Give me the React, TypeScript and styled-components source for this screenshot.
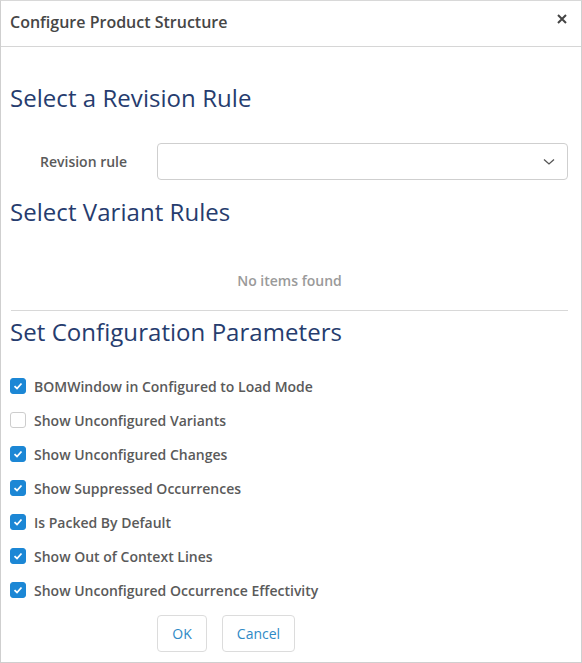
import React from "react";
import styled, { createGlobalStyle } from "styled-components";

const Global = createGlobalStyle`
  html, body { margin: 0; padding: 0; background: #fff; }
  body { font-family: "Open Sans", "Noto Sans", sans-serif; }
  * { box-sizing: border-box; }
`;

const Dialog = styled.div`
  width: 582px;
  height: 663px;
  border: 1px solid #cfcfcf;
  border-top-color: #d8d8d8;
  background: #fff;
  display: flex;
  flex-direction: column;
`;

const Header = styled.div`
  height: 46px;
  border-bottom: 1px solid #d6d6d6;
  display: flex;
  align-items: center;
  justify-content: space-between;
  padding: 0 12px 4px 9px;
`;

const Title = styled.div`
  font-size: 16px;
  font-weight: 600;
  color: #464646;
`;

const Close = styled.button`
  border: none;
  background: none;
  padding: 0;
  width: 14px;
  height: 14px;
  display: flex;
  align-items: center;
  justify-content: center;
  margin-top: -6px;
  cursor: pointer;
`;

const Body = styled.div`
  flex: 1;
  padding: 35px 13px 0 9px;
  display: flex;
  flex-direction: column;
`;

const Heading = styled.h2`
  margin: 0;
  font-size: 24px;
  font-weight: 400;
  line-height: 32px;
  color: #263c6e;
  letter-spacing: 0.05px;
`;

const FieldRow = styled.div`
  display: flex;
  align-items: center;
  margin-top: 29px;
  margin-bottom: 16px;
`;

const Label = styled.label`
  width: 147px;
  padding-left: 30px;
  font-size: 14px;
  font-weight: 600;
  color: #5a5a5a;
`;

const Select = styled.div`
  flex: 1;
  height: 37px;
  border: 1px solid #cfcfcf;
  border-radius: 4px;
  display: flex;
  align-items: center;
  justify-content: flex-end;
  padding-right: 12px;
`;

const Empty = styled.div`
  text-align: center;
  font-size: 14px;
  font-weight: 600;
  color: #9a9a9a;
  padding: 43px 0 20px;
  border-bottom: 1px solid #d8d8d8;
  margin-left: 1px;
  margin-bottom: 5px;
`;

const CheckList = styled.div`
  display: flex;
  flex-direction: column;
  gap: 14px;
  margin-top: 28px;
`;

const CheckRow = styled.label`
  display: flex;
  align-items: center;
  gap: 8px;
  height: 20px;
  font-size: 14px;
  font-weight: 600;
  color: #5a5a5a;
`;

const Box = styled.span<{ $checked: boolean }>`
  width: 16px;
  height: 16px;
  border-radius: 3px;
  display: flex;
  align-items: center;
  justify-content: center;
  background: ${(p) => (p.$checked ? "#1c87d5" : "#fff")};
  border: 1px solid ${(p) => (p.$checked ? "#1c87d5" : "#cdcdcd")};
`;

const Buttons = styled.div`
  display: flex;
  gap: 15px;
  padding-left: 147px;
  margin-top: 15px;
`;

const Button = styled.button<{ $w: number }>`
  width: ${(p) => p.$w}px;
  height: 37px;
  border: 1px solid #dcdcdc;
  border-radius: 4px;
  background: #fff;
  color: #2f8ac6;
  font-family: "Open Sans", sans-serif;
  font-size: 14px;
  cursor: pointer;
`;

const items: [string, boolean][] = [
  ["BOMWindow in Configured to Load Mode", true],
  ["Show Unconfigured Variants", false],
  ["Show Unconfigured Changes", true],
  ["Show Suppressed Occurrences", true],
  ["Is Packed By Default", true],
  ["Show Out of Context Lines", true],
  ["Show Unconfigured Occurrence Effectivity", true],
];

export default function App() {
  return (
    <>
      <Global />
      <Dialog>
        <Header>
          <Title>Configure Product Structure</Title>
          <Close aria-label="close">
            <svg width="10" height="10" viewBox="0 0 10 10">
              <path d="M1 1L9 9M9 1L1 9" stroke="#444" strokeWidth="2" />
            </svg>
          </Close>
        </Header>
        <Body>
          <Heading>Select a Revision Rule</Heading>
          <FieldRow>
            <Label>Revision rule</Label>
            <Select>
              <svg width="12" height="8" viewBox="0 0 12 8">
                <path d="M1 1.5L6 6L11 1.5" fill="none" stroke="#555" strokeWidth="1.3" />
              </svg>
            </Select>
          </FieldRow>
          <Heading>Select Variant Rules</Heading>
          <Empty>No items found</Empty>
          <Heading>Set Configuration Parameters</Heading>
          <CheckList>
            {items.map(([t, c]) => (
              <CheckRow key={t}>
                <Box $checked={c}>
                  {c && (
                    <svg width="10" height="8" viewBox="0 0 10 8">
                      <path d="M1.5 4.2L4 6.5L8.5 1.5" fill="none" stroke="#fff" strokeWidth="1.8" />
                    </svg>
                  )}
                </Box>
                {t}
              </CheckRow>
            ))}
          </CheckList>
          <Buttons>
            <Button $w={50}>OK</Button>
            <Button $w={73}>Cancel</Button>
          </Buttons>
        </Body>
      </Dialog>
    </>
  );
}
